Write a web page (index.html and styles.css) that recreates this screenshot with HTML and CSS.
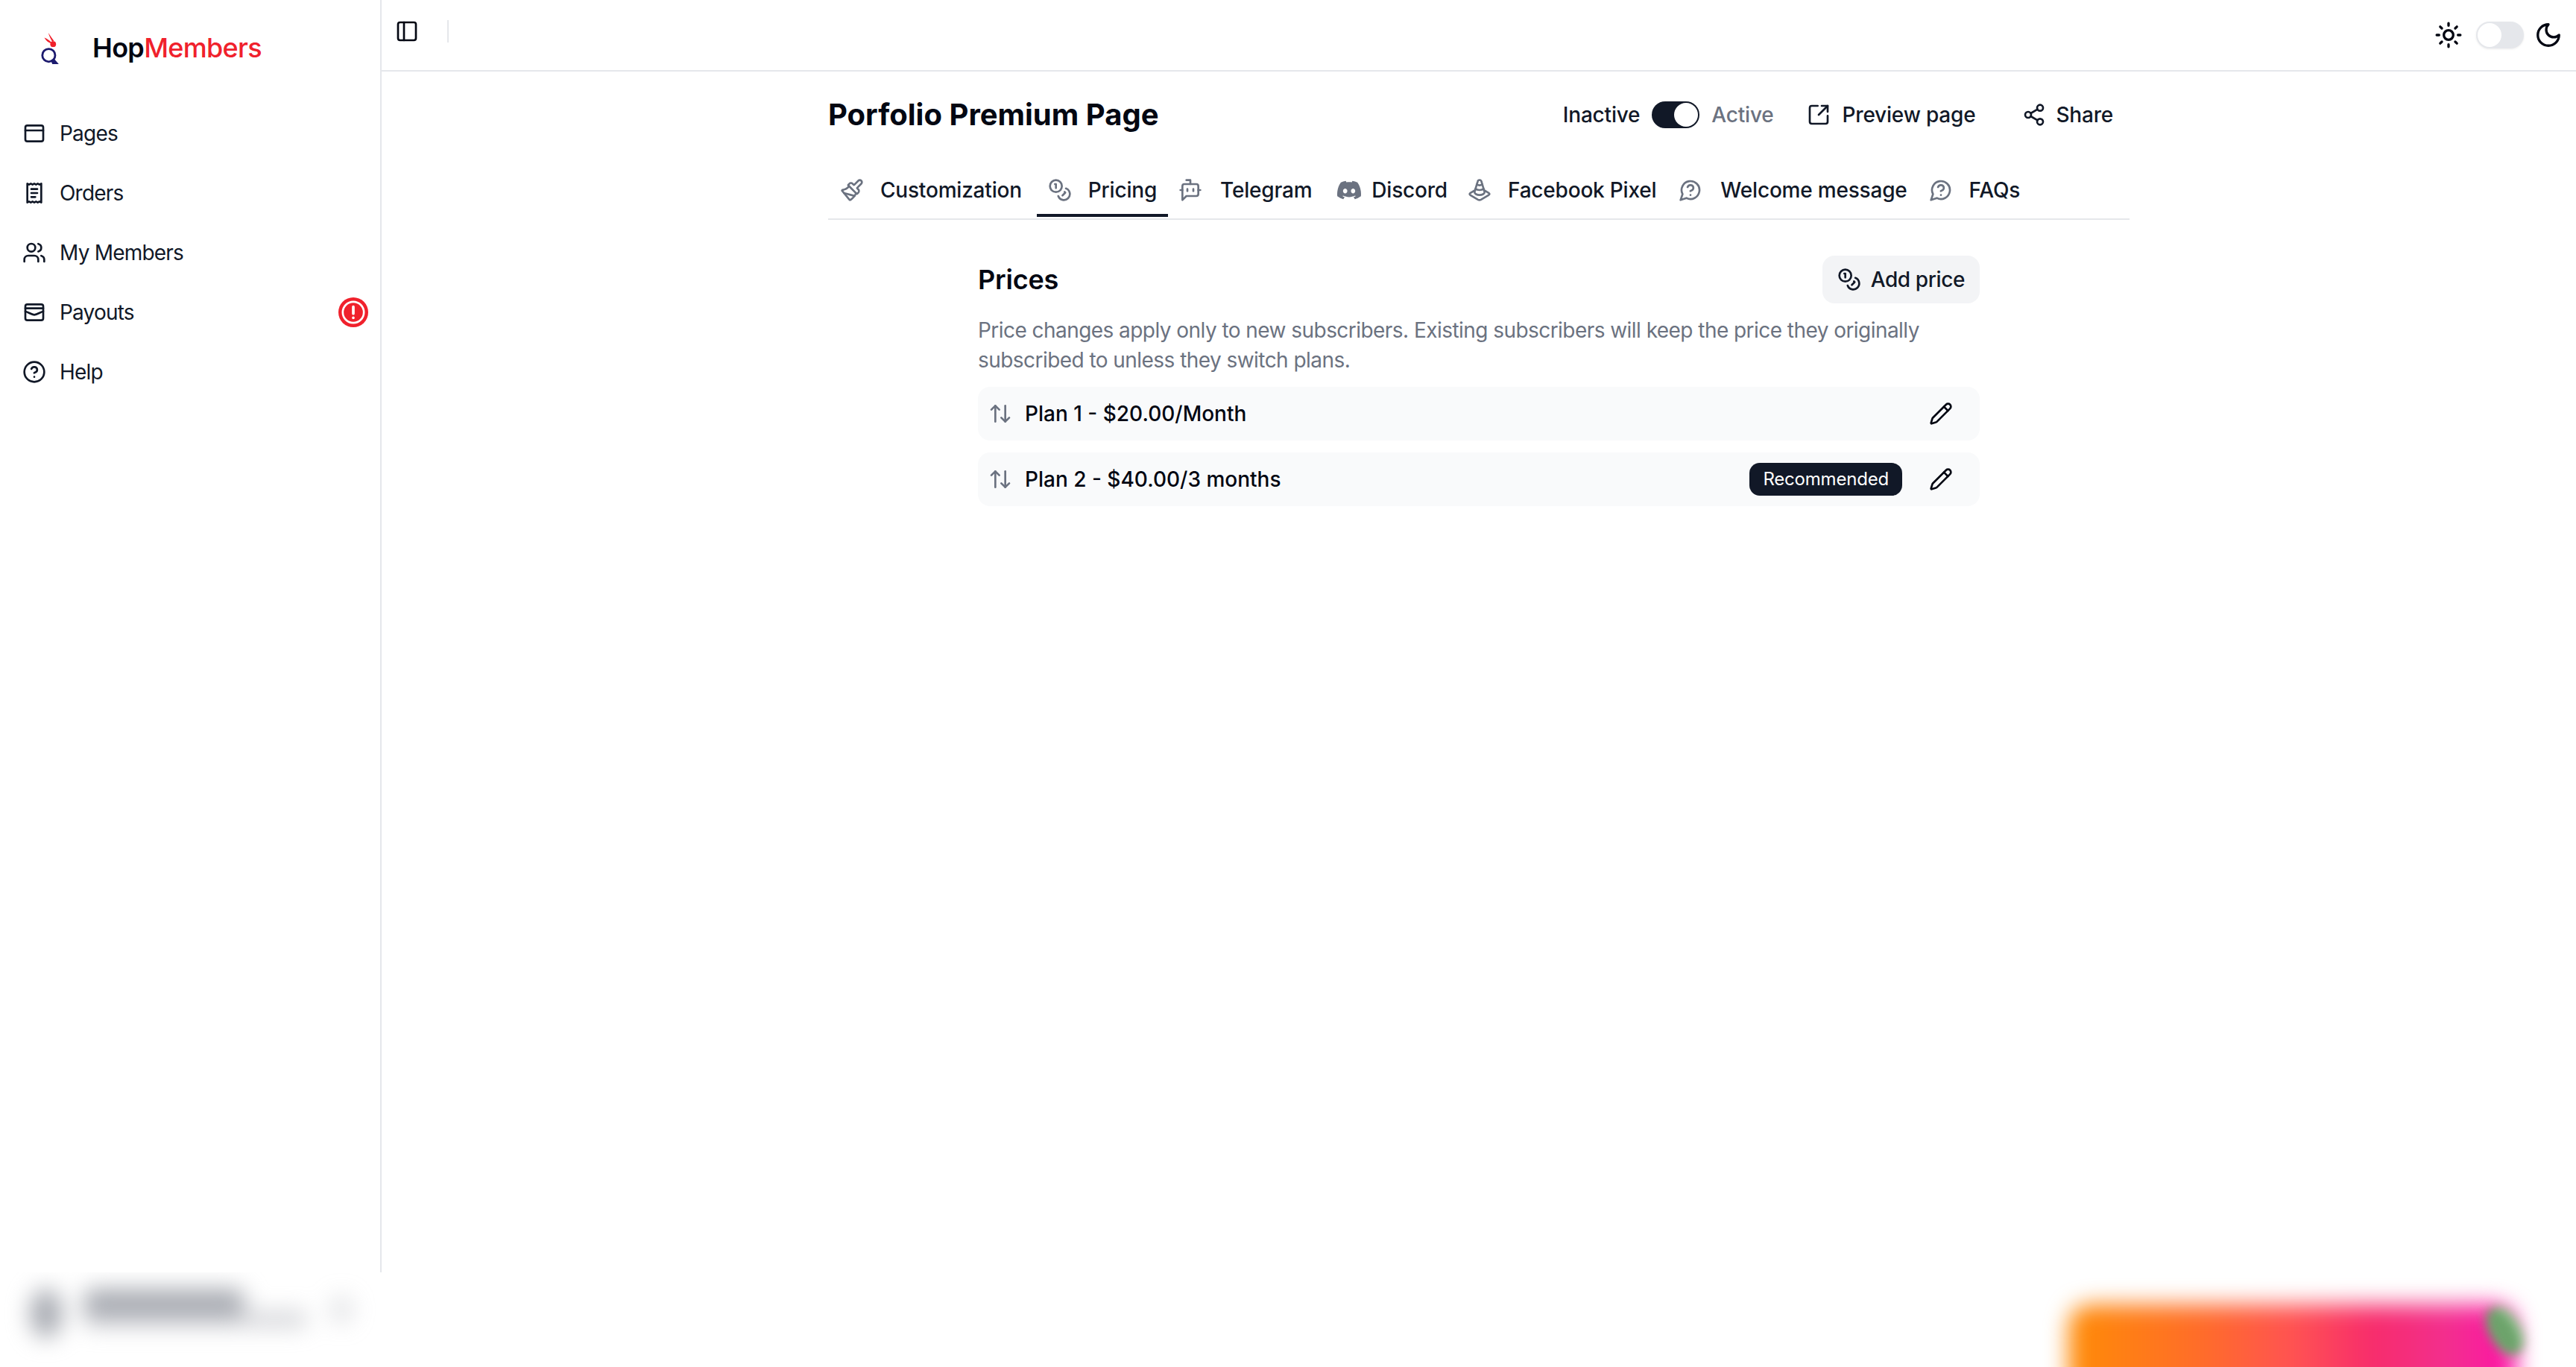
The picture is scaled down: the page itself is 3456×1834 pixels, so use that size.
FILE: index.html
```html
<!DOCTYPE html>
<html lang="en">
<head>
  <meta charset="UTF-8" />
  <title>HopMembers – Pricing</title>
  <link rel="stylesheet" href="styles.css">
</head>
<body>
  <svg class="sprite" xmlns="http://www.w3.org/2000/svg">
    <symbol id="i-pages" viewBox="0 0 24 24"><rect x="3" y="4" width="18" height="16" rx="2"/><path d="M3 9h18"/></symbol>
    <symbol id="i-orders" viewBox="0 0 24 24"><path d="M5 2.5v19l1.75-1 1.75 1 1.75-1 1.75 1 1.75-1 1.75 1 1.75-1 1.75 1v-19l-1.75 1-1.75-1-1.75 1-1.75-1-1.75 1-1.75-1-1.75 1z"/><path d="M9 8h6M9 12h6M9 16h4"/></symbol>
    <symbol id="i-users" viewBox="0 0 24 24"><path d="M16 21v-2a4 4 0 0 0-4-4H6a4 4 0 0 0-4 4v2"/><circle cx="9" cy="7" r="4"/><path d="M22 21v-2a4 4 0 0 0-3-3.87"/><path d="M16 3.13a4 4 0 0 1 0 7.75"/></symbol>
    <symbol id="i-payouts" viewBox="0 0 24 24"><rect x="3" y="4" width="18" height="16" rx="2"/><path d="M3 8h18"/><path d="M3 11c3.5 1 6 3.5 9 3.5s5.500-2.500 9-3.500"/></symbol>
    <symbol id="i-help" viewBox="0 0 24 24"><circle cx="12" cy="12" r="10"/><path d="M9.09 9a3 3 0 0 1 5.83 1c0 2-3 3-3 3"/><path d="M12 17h.01"/></symbol>
    <symbol id="i-panel" viewBox="0 0 24 24"><rect x="3" y="3" width="18" height="18" rx="2"/><path d="M9 3v18"/></symbol>
    <symbol id="i-sun" viewBox="0 0 24 24"><circle cx="12" cy="12" r="4"/><path d="M12 2v2M12 20v2M4.93 4.93l1.41 1.41M17.66 17.66l1.41 1.41M2 12h2M20 12h2M6.34 17.66l-1.41 1.41M19.07 4.93l-1.41 1.41"/></symbol>
    <symbol id="i-moon" viewBox="0 0 24 24"><path d="M12 3a6 6 0 0 0 9 9 9 9 0 1 1-9-9Z"/></symbol>
    <symbol id="i-external" viewBox="0 0 24 24"><path d="M21 13v6a2 2 0 0 1-2 2H5a2 2 0 0 1-2-2V5a2 2 0 0 1 2-2h6"/><path d="m21 3-9 9"/><path d="M15 3h6v6"/></symbol>
    <symbol id="i-share" viewBox="0 0 24 24"><circle cx="18" cy="5" r="3"/><circle cx="6" cy="12" r="3"/><circle cx="18" cy="19" r="3"/><path d="m8.59 13.51 6.83 3.98"/><path d="m15.41 6.51-6.82 3.98"/></symbol>
    <symbol id="i-brush" viewBox="0 0 24 24"><path d="m14.622 17.897-10.68-2.913"/><path d="M18.376 2.622a1 1 0 1 1 3.002 3.002L17.36 9.643a.5.5 0 0 0 0 .707l.944.944a2.41 2.41 0 0 1 0 3.408l-.944.944a.5.5 0 0 1-.707 0L8.354 7.348a.5.5 0 0 1 0-.707l.944-.944a2.41 2.41 0 0 1 3.408 0l.944.944a.5.5 0 0 0 .707 0z"/><path d="M9 8c-1.804 2.71-3.97 3.46-6.583 3.948a.507.507 0 0 0-.302.819l7.32 8.883a1 1 0 0 0 1.185.204C12.735 20.405 16 16.792 16 15"/></symbol>
    <symbol id="i-coins" viewBox="0 0 24 24"><circle cx="8" cy="8" r="6"/><path d="M18.09 10.37A6 6 0 1 1 10.34 18"/><path d="M7 6h1v4"/><path d="m16.71 13.88.7.71-2.82 2.82"/></symbol>
    <symbol id="i-bot" viewBox="0 0 24 24"><path d="M12 6V2H8"/><path d="m8 18-4 4V8a2 2 0 0 1 2-2h12a2 2 0 0 1 2 2v8a2 2 0 0 1-2 2Z"/><path d="M2 12h2"/><path d="M9 11v2"/><path d="M15 11v2"/><path d="M20 12h2"/></symbol>
    <symbol id="i-cone" viewBox="0 0 24 24"><path d="M9.3 6.2a4.55 4.55 0 0 0 5.4 0"/><path d="M7.9 10.7c.9.8 2.4 1.3 4.1 1.3s3.2-.5 4.1-1.3"/><path d="M13.9 3.5a1.93 1.93 0 0 0-3.8-.1l-3 10c-.1.2-.1.4-.1.6 0 1.7 2.2 3 5 3s5-1.3 5-3c0-.2 0-.4-.1-.5Z"/><path d="m7.5 12.2-4.7 2.7c-.5.3-.8.7-.8 1.1s.3.8.8 1.1l7.6 4.5c.9.5 2.1.5 3 0l7.6-4.5c.7-.3 1-.7 1-1.1s-.3-.8-.8-1.1l-4.7-2.8"/></symbol>
    <symbol id="i-question" viewBox="0 0 24 24"><path d="M7.9 20A9 9 0 1 0 4 16.1L2 22Z"/><path d="M9.09 9a3 3 0 0 1 5.83 1c0 2-3 3-3 3"/><path d="M12 17h.01"/></symbol>
    <symbol id="i-sort" viewBox="0 0 24 24"><path d="m21 16-4 4-4-4"/><path d="M17 20V4"/><path d="m3 8 4-4 4 4"/><path d="M7 4v16"/></symbol>
    <symbol id="i-pencil" viewBox="0 0 24 24"><path d="M21.174 6.812a1 1 0 0 0-3.986-3.987L3.842 16.174a2 2 0 0 0-.5.83l-1.321 4.352a.5.5 0 0 0 .623.622l4.353-1.32a2 2 0 0 0 .83-.497z"/><path d="m15 5 4 4"/></symbol>
  </svg>

  <div class="app">
    <aside class="sidebar">
      <div class="brand">
        <svg class="brand-logo" viewBox="0 0 24 40" xmlns="http://www.w3.org/2000/svg">
          <path class="logo-red" d="M10 1c2 3 4 6 7 10l-2 1C13 9 11 5 10 1zM5 7c3 1 6 3 9 6l-1 1C10 13 7 11 5 7z"/>
          <circle class="logo-red" cx="16" cy="15" r="3.600"/>
          <circle class="logo-ring" cx="10.500" cy="29" r="8"/>
          <path class="logo-navy" d="M13 35l4-2 6 7H15z"/>
        </svg>
        <span class="brand-name">Hop<span class="brand-accent">Members</span></span>
      </div>
      <nav class="nav">
        <a class="nav-item"><svg class="icon"><use href="#i-pages"/></svg>Pages</a>
        <a class="nav-item"><svg class="icon"><use href="#i-orders"/></svg>Orders</a>
        <a class="nav-item"><svg class="icon"><use href="#i-users"/></svg>My Members</a>
        <a class="nav-item"><svg class="icon"><use href="#i-payouts"/></svg>Payouts
          <span class="alert-badge">
            <svg viewBox="0 0 24 24" xmlns="http://www.w3.org/2000/svg"><circle cx="12" cy="12" r="8.500"/><path d="M12 7.500v5.500M12 16.400v.1"/></svg>
          </span>
        </a>
        <a class="nav-item"><svg class="icon"><use href="#i-help"/></svg>Help</a>
      </nav>
      <div class="account">
        <div class="account-blur">
          <span class="blur-avatar"></span>
          <span class="blur-name"></span>
          <span class="blur-mail"></span>
          <span class="blur-caret"></span>
        </div>
      </div>
    </aside>

    <div class="main">
      <header class="topbar">
        <svg class="icon panel-icon"><use href="#i-panel"/></svg>
        <span class="topbar-sep"></span>
        <div class="theme-switch">
          <svg class="icon theme-icon"><use href="#i-sun"/></svg>
          <span class="theme-toggle"><span class="theme-thumb"></span></span>
          <svg class="icon theme-icon"><use href="#i-moon"/></svg>
        </div>
      </header>

      <div class="page">
        <div class="title-row">
          <h1 class="page-title">Porfolio Premium Page</h1>
          <div class="title-actions">
            <span>Inactive</span>
            <span class="status-toggle"><span class="status-thumb"></span></span>
            <span class="muted">Active</span>
            <a class="link-btn preview-btn"><svg class="icon"><use href="#i-external"/></svg>Preview page</a>
            <a class="link-btn share-btn"><svg class="icon"><use href="#i-share"/></svg>Share</a>
          </div>
        </div>

        <div class="tabs">
          <a class="tab tab-brush"><svg class="icon"><use href="#i-brush"/></svg>Customization</a>
          <a class="tab active"><svg class="icon"><use href="#i-coins"/></svg>Pricing</a>
          <a class="tab tab-bot"><svg class="icon"><use href="#i-bot"/></svg>Telegram</a>
          <a class="tab tab-discord"><svg class="icon discord" viewBox="0 0 24 24" xmlns="http://www.w3.org/2000/svg"><path d="M20.317 4.3698a19.7913 19.7913 0 00-4.8851-1.5152.0741.0741 0 00-.0785.0371c-.211.3753-.4447.8648-.6083 1.2495-1.8447-.2762-3.68-.2762-5.4868 0-.1636-.3933-.4058-.8742-.6177-1.2495a.077.077 0 00-.0785-.037 19.7363 19.7363 0 00-4.8852 1.515.0699.0699 0 00-.0321.0277C.5334 9.0458-.319 13.5799.0992 18.0578a.0824.0824 0 00.0312.0561c2.0528 1.5076 4.0413 2.4228 5.9929 3.0294a.0777.0777 0 00.0842-.0276c.4616-.6304.8731-1.2952 1.226-1.9942a.076.076 0 00-.0416-.1057c-.6528-.2476-1.2743-.5495-1.8722-.8923a.077.077 0 01-.0076-.1277c.1258-.0943.2517-.1923.3718-.2914a.0743.0743 0 01.0776-.0105c3.9278 1.7933 8.18 1.7933 12.0614 0a.0739.0739 0 01.0785.0095c.1202.099.246.1981.3728.2924a.077.077 0 01-.0066.1276 12.2986 12.2986 0 01-1.873.8914.0766.0766 0 00-.0407.1067c.3604.698.7719 1.3628 1.225 1.9932a.076.076 0 00.0842.0286c1.961-.6067 3.9495-1.5219 6.0023-3.0294a.077.077 0 00.0313-.0552c.5004-5.177-.8382-9.6739-3.5485-13.6604a.061.061 0 00-.0312-.0286zM8.02 15.3312c-1.1825 0-2.1569-1.0857-2.1569-2.419 0-1.3332.9555-2.4189 2.157-2.4189 1.2108 0 2.1757 1.0952 2.1568 2.419 0 1.3332-.9555 2.4189-2.1569 2.4189zm7.9748 0c-1.1825 0-2.1569-1.0857-2.1569-2.419 0-1.3332.9554-2.4189 2.1569-2.4189 1.2108 0 2.1757 1.0952 2.1568 2.419 0 1.3332-.946 2.4189-2.1568 2.4189Z"/></svg>Discord</a>
          <a class="tab tab-cone"><svg class="icon"><use href="#i-cone"/></svg>Facebook Pixel</a>
          <a class="tab tab-welcome"><svg class="icon"><use href="#i-question"/></svg>Welcome message</a>
          <a class="tab tab-faq"><svg class="icon"><use href="#i-question"/></svg>FAQs</a>
        </div>

        <section class="prices">
          <div class="prices-head">
            <h2 class="prices-title">Prices</h2>
            <button class="add-btn"><svg class="icon"><use href="#i-coins"/></svg>Add price</button>
          </div>
          <p class="prices-note">Price changes apply only to new subscribers. Existing subscribers will keep the price they originally subscribed to unless they switch plans.</p>
          <div class="plan">
            <svg class="icon sort-icon"><use href="#i-sort"/></svg>
            <span class="plan-name">Plan 1 - $20.00/Month</span>
            <svg class="icon edit-icon"><use href="#i-pencil"/></svg>
          </div>
          <div class="plan">
            <svg class="icon sort-icon"><use href="#i-sort"/></svg>
            <span class="plan-name">Plan 2 - $40.00/3 months</span>
            <span class="plan-badge">Recommended</span>
            <svg class="icon edit-icon"><use href="#i-pencil"/></svg>
          </div>
        </section>
      </div>
    </div>
  </div>

  <!-- promo widget, blurred out in the capture -->
  <div class="promo">
    <span class="promo-bar"></span>
    <span class="promo-close"></span>
  </div>
</body>
</html>
```
FILE: styles.css
```css
:root {
  --ink: #030712;
  --dark: #111827;
  --muted: #6b7280;
  --line: #e5e7eb;
  --row: #f9fafb;
  --red: #f0212c;
}

html, body {
  margin: 0;
  padding: 0;
  height: 100%;
  overflow: hidden;
  background: #fff;
  color: var(--ink);
  font-family: 'Inter', sans-serif;
  font-size: 28px;
  line-height: 40px;
}

.sprite {
  display: none;
}

.icon {
  width: 32px;
  height: 32px;
  flex: none;
  fill: none;
  stroke: currentColor;
  stroke-width: 2;
  stroke-linecap: round;
  stroke-linejoin: round;
}

.app {
  display: flex;
  height: 100%;
}

/* Sidebar */
.sidebar {
  width: 510px;
  flex: none;
  display: flex;
  flex-direction: column;
  border-right: 2px solid var(--line);
}

.brand {
  height: 96px;
  padding-left: 54px;
  margin-top: 16px;
  display: flex;
  align-items: center;
  gap: 44px;
}

.brand-logo {
  width: 26px;
  height: 43px;
}

.logo-red { fill: var(--red); }
.logo-navy { fill: #1c1a6e; }
.logo-ring {
  fill: none;
  stroke: #1c1a6e;
  stroke-width: 2.6;
}

.brand-name {
  font-size: 36px;
  font-weight: 600;
  letter-spacing: -0.7px;
}

.brand-accent {
  color: var(--red);
  font-weight: 500;
}

.nav {
  flex: 1;
  padding-top: 27px;
}

.nav-item {
  height: 80px;
  padding: 0 16px 0 30px;
  display: flex;
  align-items: center;
  gap: 18px;
  color: var(--dark);
  letter-spacing: -0.8px;
}

.alert-badge {
  width: 40px;
  height: 40px;
  margin-left: auto;
  border-radius: 50%;
  background: var(--red);
}

.alert-badge svg {
  display: block;
  width: 40px;
  height: 40px;
  fill: none;
  stroke: #fff;
  stroke-width: 1.6;
  stroke-linecap: round;
}

.alert-badge svg path {
  stroke-width: 2.2;
}

.account {
  height: 127px;
  margin-right: -2px;
  background: #fff;
  position: relative;
  overflow: hidden;
}

.account-blur {
  position: absolute;
  inset: 0;
  filter: blur(15px);
}

.account-blur span {
  position: absolute;
  background: #a9acb3;
}

.blur-avatar {
  left: 40px;
  top: 22px;
  width: 44px;
  height: 66px;
  border-radius: 50%;
}

.blur-name {
  left: 112px;
  top: 22px;
  width: 216px;
  height: 38px;
  border-radius: 14px;
}

.blur-mail {
  left: 112px;
  top: 52px;
  width: 300px;
  height: 22px;
  border-radius: 8px;
  opacity: .5;
}

.blur-caret {
  left: 442px;
  top: 30px;
  width: 32px;
  height: 40px;
  border-radius: 50%;
  opacity: .3;
}

/* Top bar */
.main {
  flex: 1;
  min-width: 0;
  display: flex;
  flex-direction: column;
}

.topbar {
  height: 96px;
  flex: none;
  box-sizing: border-box;
  padding: 0 18px 0 18px;
  display: flex;
  align-items: center;
  border-bottom: 2px solid var(--line);
  color: var(--dark);
}

.panel-icon {
  margin: 0 38px 10px 0;
  color: var(--ink);
}

.topbar-sep {
  width: 2px;
  height: 30px;
  margin-bottom: 10px;
  background: var(--line);
}

.theme-switch {
  margin-left: auto;
  display: flex;
  align-items: center;
  gap: 18px;
  color: var(--ink);
}

.theme-icon {
  width: 38px;
  height: 38px;
  stroke-width: 2.1;
}

.theme-toggle {
  width: 64px;
  height: 36px;
  margin-right: -4px;
  border-radius: 18px;
  background: var(--line);
  padding: 2px;
  box-sizing: border-box;
  display: flex;
  box-shadow: 0 1px 3px rgba(0, 0, 0, .08);
}

.theme-thumb {
  width: 32px;
  height: 32px;
  border-radius: 50%;
  background: #fff;
}

/* Page */
.page {
  width: 1746px;
  margin: 0 auto;
}

.title-row {
  height: 48px;
  margin: 34px 0 49px;
  display: flex;
  align-items: center;
  justify-content: space-between;
}

.page-title {
  margin: 0;
  font-size: 40px;
  line-height: 48px;
  font-weight: 700;
}

.title-actions {
  display: flex;
  align-items: center;
  gap: 16px;
  color: var(--dark);
  font-weight: 500;
  letter-spacing: -0.2px;
}

.muted {
  color: var(--muted);
}

.status-toggle {
  width: 64px;
  height: 36px;
  border-radius: 18px;
  background: var(--dark);
  padding: 2px;
  box-sizing: border-box;
  display: flex;
  justify-content: flex-end;
}

.status-thumb {
  width: 32px;
  height: 32px;
  border-radius: 50%;
  background: #fff;
}

.link-btn {
  display: flex;
  align-items: center;
  gap: 16px;
}

.preview-btn {
  margin: 0 47px 0 28px;
}

.share-btn {
  margin-right: 22px;
  gap: 13px;
}

/* Tabs */
.tabs {
  display: flex;
  border-bottom: 2px solid var(--line);
  padding-bottom: 2px;
}

.tab {
  height: 64px;
  padding: 0 16px 8px;
  display: flex;
  align-items: center;
  gap: 22px;
  box-sizing: border-box;
  color: var(--dark);
  font-weight: 500;
  letter-spacing: -0.2px;
  white-space: nowrap;
}

.tab .icon {
  color: var(--muted);
}

.tab.active {
  padding: 0 15px 4px;
  border-bottom: 4px solid var(--dark);
}

.tab-brush {
  padding-right: 20px;
}

.tab-bot {
  margin-left: -2px;
  gap: 24px;
}

.tab-discord {
  margin-left: 2px;
  gap: 14px;
}

.tab-cone {
  margin-left: -5px;
}

.tab-welcome {
  margin-left: -2px;
  gap: 24px;
}

.tab-faq {
  margin-left: -3px;
}

.discord {
  fill: var(--muted);
  stroke: none;
}

/* Prices */
.prices {
  width: 1344px;
  margin: 48px auto 0;
}

.prices-head {
  height: 64px;
  display: flex;
  align-items: center;
  justify-content: space-between;
}

.prices-title {
  margin: 0;
  font-size: 36px;
  line-height: 48px;
  font-weight: 600;
  letter-spacing: -0.2px;
}

.add-btn {
  height: 64px;
  padding: 0 20px 0 20px;
  display: flex;
  align-items: center;
  gap: 13px;
  border: none;
  border-radius: 16px;
  background: #f3f4f6;
  color: var(--dark);
  font: 500 28px/40px 'Inter', sans-serif;
  letter-spacing: -0.4px;
}

.prices-note {
  margin: 16px 0;
  color: var(--muted);
  letter-spacing: -0.55px;
}

.plan {
  height: 72px;
  margin-bottom: 16px;
  padding: 0 36px 0 14px;
  display: flex;
  align-items: center;
  border-radius: 16px;
  background: var(--row);
}

.sort-icon {
  color: var(--muted);
  margin-right: 17px;
}

.plan-name {
  font-weight: 500;
}

.plan-badge {
  margin-left: auto;
  height: 44px;
  padding: 0 18px;
  display: flex;
  align-items: center;
  border-radius: 14px;
  background: var(--dark);
  color: #fff;
  font-size: 24px;
  letter-spacing: -0.2px;
}

.edit-icon {
  margin-left: auto;
}

.plan-badge + .edit-icon {
  margin-left: 36px;
}

/* Blurred promo */
.promo {
  position: fixed;
  left: 2775px;
  bottom: 0;
  width: 601px;
  height: 84px;
}

.promo-bar {
  position: absolute;
  left: 0;
  right: 0;
  top: 0;
  height: 130px;
  border-radius: 30px;
  background: linear-gradient(90deg, #ff8c06 0%, #ff6c2a 30%, #ff5352 50%, #f72c6c 68%, #f22f8f 85%, #ff12a8 100%);
  filter: blur(15px);
}

.promo-close {
  position: absolute;
  right: 0;
  top: 2px;
  width: 36px;
  height: 70px;
  border-radius: 50%;
  background: #6da36b;
  box-shadow: 8px 0 0 #a7dba8;
  transform: rotate(-30deg);
  filter: blur(7px);
}
```
